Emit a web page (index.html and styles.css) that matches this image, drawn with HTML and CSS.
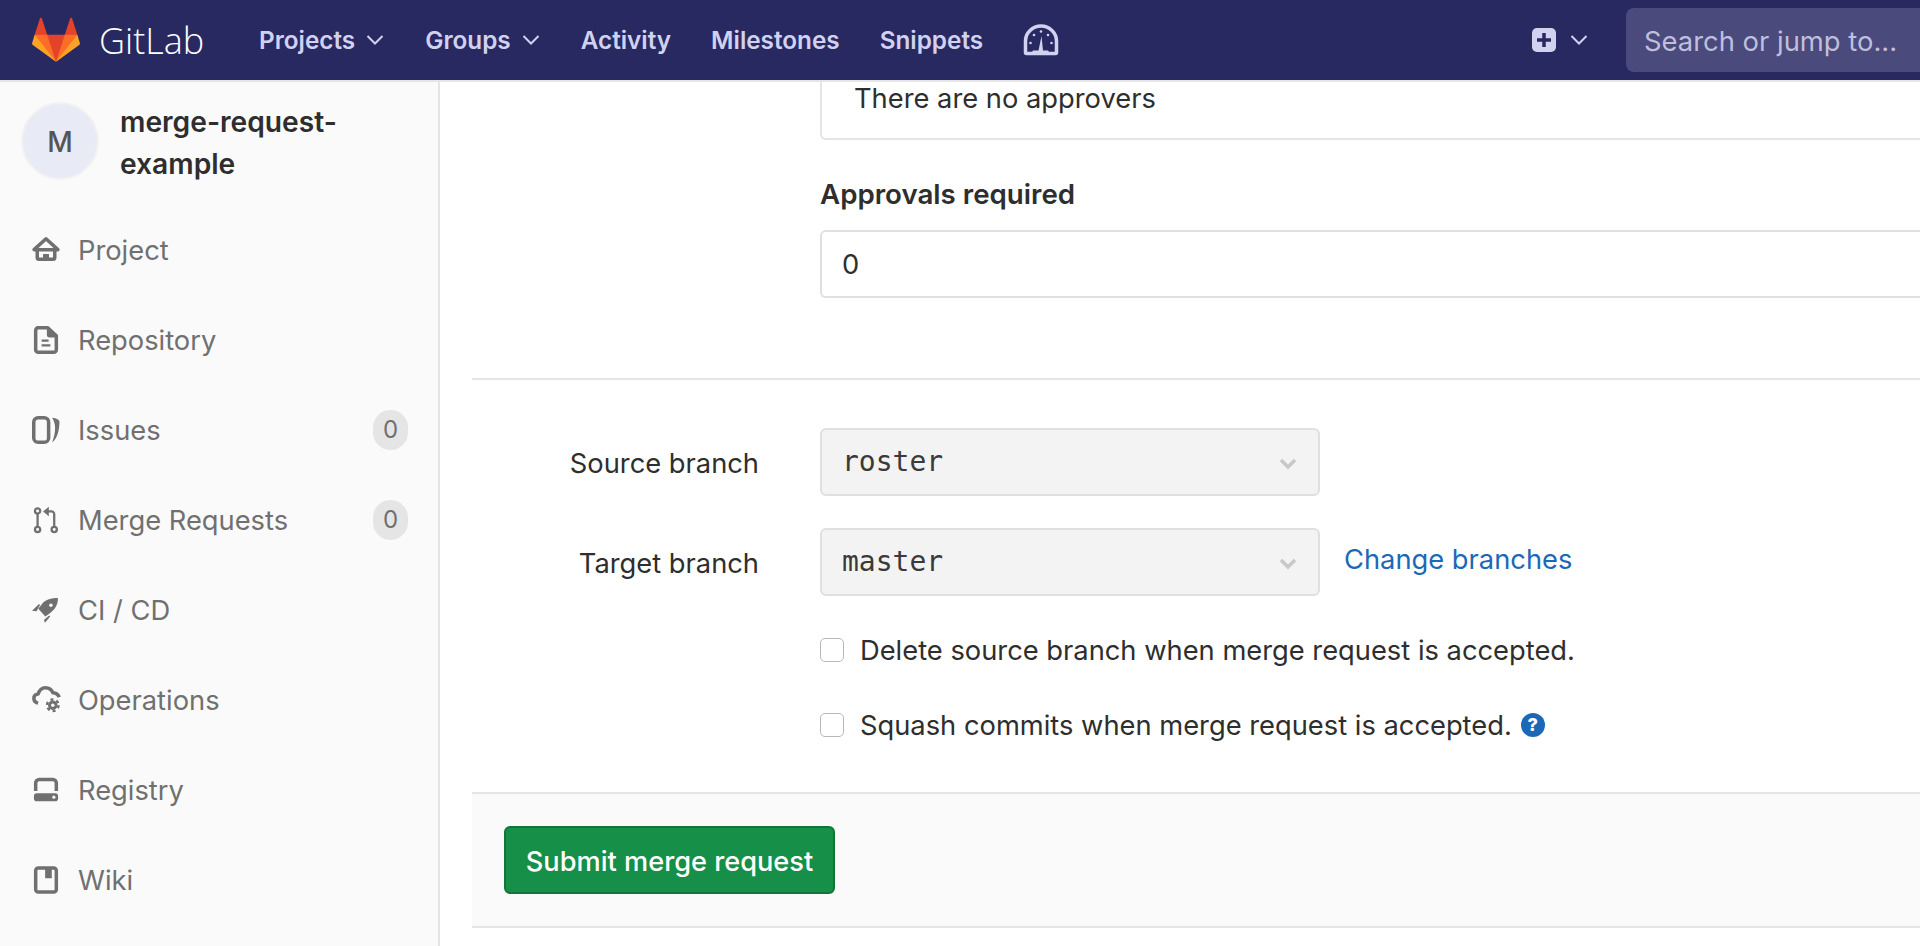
FILE: index.html

```html
<!DOCTYPE html>
<html lang="en">
<head>
  <meta charset="UTF-8">
  <title>New Merge Request - merge-request-example</title>
  <link rel="stylesheet" href="styles.css">
</head>
<body>
  <header class="navbar">
    <a class="brand" href="#">
      <svg class="tanuki" viewBox="0 0 36 36">
        <path fill="#e24329" d="M2 14l9.38 9v-9l-4-12.28c-.205-.632-1.176-.632-1.38 0z"/>
        <path fill="#e24329" d="M34 14l-9.38 9v-9l4-12.28c.205-.632 1.176-.632 1.38 0z"/>
        <path fill="#e24329" d="M18,34.38 3,14 33,14 Z"/>
        <path fill="#fc6d26" d="M18,34.38 11.38,14 2,14 6,25Z"/>
        <path fill="#fc6d26" d="M18,34.38 24.62,14 34,14 30,25Z"/>
        <path fill="#fca326" d="M2 14L.1 20.16c-.18.565 0 1.2.5 1.56l17.42 12.66z"/>
        <path fill="#fca326" d="M34 14l1.9 6.16c.18.565 0 1.2-.5 1.56L18 34.38z"/>
      </svg>
      <span class="brand-name">GitLab</span>
    </a>
    <nav class="top-links">
      <a href="#">Projects <svg class="caret" viewBox="0 0 18 12"><path d="M1.500 2l7.500 7.500L16.500 2"/></svg></a>
      <a href="#">Groups <svg class="caret" viewBox="0 0 18 12"><path d="M1.500 2l7.500 7.500L16.500 2"/></svg></a>
      <a href="#">Activity</a>
      <a href="#">Milestones</a>
      <a href="#">Snippets</a>
      <a href="#" class="perf-link">
        <svg class="perf-icon" viewBox="0 0 36 32">
          <path class="arch" d="M3.5 29.5a1 1 0 0 1-1-1V17a15.5 15 0 0 1 31 0v11.500a1 1 0 0 1-1 1z"/>
          <path class="needle" d="M19.500 12l1.500 14.500h5l1 1.500H10l1-1.500h5.500z" transform="translate(-1)"/>
          <circle cx="7.500" cy="19" r="1.300"/><circle cx="28.500" cy="19" r="1.300"/>
          <circle cx="11" cy="11" r="1.300"/><circle cx="25" cy="11" r="1.300"/><circle cx="18" cy="7.500" r="1.300"/>
        </svg>
      </a>
    </nav>
    <div class="nav-right">
      <a class="new-menu" href="#">
        <svg class="plus-icon" viewBox="0 0 24 24">
          <rect width="24" height="24" rx="5"/>
          <path d="M12 5v14M5 12h14"/>
        </svg>
        <svg class="caret" viewBox="0 0 18 12"><path d="M1.500 2l7.500 7.500L16.500 2"/></svg>
      </a>
      <div class="search-box">Search or jump to...</div>
    </div>
  </header>

  <div class="layout">
    <aside class="sidebar">
      <div class="project-head">
        <div class="avatar">M</div>
        <div class="project-name">merge-request-example</div>
      </div>
      <ul class="side-nav">
        <li>
          <svg class="side-icon" viewBox="0 0 16 16">
            <path class="line" d="M8 1.600L1.200 7.800h13.600z"/>
            <path class="line" d="M3 8v4.300a1 1 0 0 0 1 1h8a1 1 0 0 0 1-1V8"/>
            <path d="M6.300 10.300h3.400v3H6.300z"/>
          </svg>
          <span>Project</span>
        </li>
        <li>
          <svg class="side-icon" viewBox="0 0 16 16">
            <path class="line" d="M3 1h6l4.900 4.600V13.500a1.500 1.500 0 0 1-1.500 1.500H3.600a1.500 1.500 0 0 1-1.500-1.500v-11A1.500 1.500 0 0 1 3.600 1z"/>
            <path d="M8.500 1h1l4.400 4.500v1H10a1.500 1.500 0 0 1-1.500-1.500z"/>
            <path class="thin" d="M5.500 8.300h4M5.500 11.100h5"/>
          </svg>
          <span>Repository</span>
        </li>
        <li>
          <svg class="side-icon" viewBox="0 0 16 16">
            <rect class="line" x="1" y="1" width="8.500" height="14" rx="2.500"/>
            <path d="M11.500 1c2.600.300 4.200 1.300 4.200 2.300 0 4.500-1.200 9.500-4.200 11.900 1-3 1.700-5.500 1.700-8.200 0-2.300-.5-4-1.700-6z"/>
          </svg>
          <span>Issues</span>
          <span class="badge">0</span>
        </li>
        <li>
          <svg class="side-icon" viewBox="0 0 16 16">
            <circle class="thin" cx="3.200" cy="2.800" r="1.500"/>
            <circle class="thin" cx="3.200" cy="13.400" r="1.500"/>
            <circle class="thin" cx="12.700" cy="13.400" r="1.500"/>
            <path class="thin" d="M3.200 4.300v7.600M12.700 11.900V4.600a1.500 1.500 0 0 0-1.500-1.500H9"/>
            <path d="M9.600.400L6.300 3.100l3.300 2.700z"/>
          </svg>
          <span>Merge Requests</span>
          <span class="badge">0</span>
        </li>
        <li>
          <svg class="side-icon" viewBox="0 0 16 16">
            <path d="M14.800 1.200C11 1.200 8 2 5.700 4.500L3.600 7.300l4 4.400 2.600-1.900C13 8 15 5 14.800 1.200z"/>
            <circle class="hole" cx="10.800" cy="5.300" r="1"/>
            <path d="M0 8.400l4-3.800.6.600-2 3.500zM7.400 15.300l3-3.600-.6-.6-3 2.600z"/>
          </svg>
          <span>CI / CD</span>
        </li>
        <li>
          <svg class="side-icon side-icon-wide" viewBox="0 0 17 16">
            <path class="line" d="M3.400 9.800C1.800 9.400 1 8.300 1 7c0-1.500 1.200-2.500 2.500-2.500C4 2.700 5.500 1 7.600 1c1.900 0 3.500 1 4.300 2.900 1.500.1 3 1 3.600 2.500"/>
            <circle class="teeth" cx="11.800" cy="11" r="3.300"/>
            <circle cx="11.800" cy="11" r="2.700"/>
            <circle class="hole" cx="11.800" cy="11" r="1"/>
          </svg>
          <span>Operations</span>
        </li>
        <li>
          <svg class="side-icon" viewBox="0 0 16 16">
            <path class="line" d="M2.100 8.500V4a2 2 0 0 1 2-2h7.800a2 2 0 0 1 2 2v4.500"/>
            <rect x="1.100" y="9.800" width="13.800" height="4.600" rx="1.600"/>
            <circle class="hole" cx="12.500" cy="12.100" r=".9"/>
          </svg>
          <span>Registry</span>
        </li>
        <li>
          <svg class="side-icon" viewBox="0 0 16 16">
            <rect class="line" x="2.100" y="1.100" width="11.800" height="13.800" rx="1.500"/>
            <path d="M7.500 1h3.800v6H7.500z"/>
          </svg>
          <span>Wiki</span>
        </li>
      </ul>
    </aside>

    <main class="content">
      <form class="mr-form">
        <div class="field-col approvers-box">There are no approvers</div>
        <label class="field-col approvals-label">Approvals required</label>
        <input class="field-col approvals-input" type="text" value="0">

        <hr class="divider">

        <div class="branch-row">
          <label class="row-label">Source branch</label>
          <div class="branch-select">
            <span>roster</span>
            <svg class="select-caret" viewBox="0 0 18 12"><path d="M2 2l7 7 7-7"/></svg>
          </div>
        </div>
        <div class="branch-row target-row">
          <label class="row-label">Target branch</label>
          <div class="branch-select">
            <span>master</span>
            <svg class="select-caret" viewBox="0 0 18 12"><path d="M2 2l7 7 7-7"/></svg>
          </div>
          <a class="change-link" href="#">Change branches</a>
        </div>

        <label class="field-col check-row delete-row">
          <input type="checkbox">
          <span>Delete source branch when merge request is accepted.</span>
        </label>
        <label class="field-col check-row squash-row">
          <input type="checkbox">
          <span>Squash commits when merge request is accepted.</span>
          <a class="help-dot" href="#">?</a>
        </label>

        <div class="form-actions">
          <button class="btn-submit" type="button">Submit merge request</button>
        </div>
      </form>
    </main>
  </div>
</body>
</html>
```

FILE: styles.css

```css
* {
  box-sizing: border-box;
}
html, body {
  height: 100%;
  overflow: hidden;
}
body {
  margin: 0;
  background-color: #fff;
  color: #2e2e2e;
  font-family: Inter, 'Noto Sans', sans-serif;
  font-size: 27.3px;
}
a {
  text-decoration: none;
  color: inherit;
}

/* top bar */
.navbar {
  display: flex;
  align-items: center;
  height: 82px;
  background-color: #292961;
  border-bottom: 2px solid #e5e5e5;
  color: #d1d1f0;
}
.brand {
  display: flex;
  align-items: center;
  margin-left: 32px;
  width: 227px;
}
.tanuki {
  width: 48px;
  height: 48px;
}
.brand-name {
  margin-left: 19px;
  color: #fff;
  font-family: 'Open Sans', sans-serif;
  font-weight: 300;
  font-size: 36px;
}
.top-links {
  display: flex;
  align-items: center;
  gap: 40px;
  font-size: 24.3px;
  font-weight: 600;
}
.top-links a {
  display: flex;
  align-items: center;
  gap: 11px;
}
.top-links .caret {
  margin-right: 1px;
}
.caret {
  width: 18px;
  height: 12px;
  fill: none;
  stroke: #d1d1f0;
  stroke-width: 2;
}
.perf-icon {
  width: 36px;
  height: 32px;
  fill: #d1d1f0;
}
.perf-icon .arch {
  fill: none;
  stroke: #d1d1f0;
  stroke-width: 3.5;
}
.nav-right {
  display: flex;
  align-items: center;
  margin-left: auto;
  width: 388px;
}
.new-menu {
  display: flex;
  align-items: center;
  gap: 14px;
  margin-right: 38px;
}
.plus-icon {
  width: 24px;
  height: 24px;
  fill: #d1d1f0;
}
.plus-icon path {
  fill: none;
  stroke: #292961;
  stroke-width: 3.500;
}
.search-box {
  flex: 1;
  height: 64px;
  padding: 3px 0 0 18px;
  line-height: 61px;
  background-color: #4a4a7c;
  border-radius: 8px 0 0 8px;
  color: #bfbfdc;
  font-size: 27.4px;
  white-space: nowrap;
}

/* page below the bar */
.layout {
  display: flex;
  height: calc(100% - 82px);
}
.sidebar {
  width: 440px;
  flex-shrink: 0;
  background-color: #fafafa;
  border-right: 2px solid #e5e5e5;
}
.project-head {
  display: flex;
  padding: 20px 0 0 21px;
}
.avatar {
  width: 78px;
  height: 78px;
  line-height: 77px;
  text-align: center;
  background-color: #e8eaf6;
  border: 2px solid #f2f2f2;
  border-radius: 50%;
  color: #555;
  font-size: 28px;
  font-weight: 500;
}
.project-name {
  width: 240px;
  margin-left: 21px;
  font-size: 28.2px;
  font-weight: 600;
  line-height: 41.5px;
}
.side-nav {
  list-style: none;
  margin: 0;
  padding: 0;
  color: #707070;
}
.side-nav li {
  display: flex;
  align-items: center;
  height: 90px;
  padding: 0 30px 0 32px;
}
.project-head + .side-nav {
  margin-top: 20px;
}
.side-icon {
  width: 28px;
  height: 28px;
  margin-right: 18px;
  fill: #707070;
  flex-shrink: 0;
}
.side-icon-wide {
  width: 30px;
  margin-right: 16px;
}
.side-icon .line {
  fill: none;
  stroke: #707070;
  stroke-width: 2;
  stroke-linejoin: round;
}
.side-icon .thin {
  fill: none;
  stroke: #707070;
  stroke-width: 1.300;
}
.side-icon .hole {
  fill: #fafafa;
}
.side-icon .teeth {
  fill: none;
  stroke: #707070;
  stroke-width: 1.400;
  stroke-dasharray: 1.700 1.750;
}
.badge {
  width: 35px;
  height: 40px;
  margin-left: auto;
  line-height: 40px;
  text-align: center;
  background-color: #e5e5e5;
  border-radius: 20px;
  font-size: 24px;
}

/* form */
.content {
  flex: 1;
  min-width: 0;
  padding-left: 32px;
}
.field-col {
  margin-left: 348px;
}
.approvers-box {
  height: 58px;
  padding-left: 32px;
  line-height: 34px;
  border: 2px solid #e5e5e5;
  border-width: 0 0 2px 2px;
  border-bottom-left-radius: 6px;
}
.approvals-label {
  display: block;
  margin-top: 36px;
  line-height: 36px;
  font-size: 27.7px;
  font-weight: 600;
}
.approvals-input {
  display: block;
  width: calc(100% - 348px);
  height: 68px;
  margin-top: 18px;
  padding: 0 20px;
  background-color: #fff;
  border: 2px solid #e0e0e0;
  border-right: 0;
  border-radius: 6px 0 0 6px;
  color: #2e2e2e;
  font-family: inherit;
  font-size: 27.3px;
}
.divider {
  height: 2px;
  margin: 80px 0 48px;
  background-color: #e5e5e5;
  border: 0;
}
.branch-row {
  display: flex;
  align-items: center;
}
.target-row {
  margin-top: 32px;
}
.row-label {
  width: 287px;
  padding-top: 2px;
  text-align: right;
}
.branch-select {
  display: flex;
  align-items: center;
  justify-content: space-between;
  width: 500px;
  height: 68px;
  margin-left: 61px;
  padding: 0 21px 2px 20px;
  background-color: #f3f3f3;
  border: 2px solid #e0e0e0;
  border-radius: 6px;
  color: #3a3a3a;
  font-family: 'DejaVu Sans Mono', monospace;
  font-size: 28px;
}
.select-caret {
  width: 18px;
  height: 12px;
  margin-top: 6px;
  fill: none;
  stroke: #c8c8c8;
  stroke-width: 3.500;
}
.change-link {
  margin: -5px 0 0 24px;
  color: #1b69b6;
}
.check-row {
  display: flex;
  align-items: center;
  line-height: 34px;
}
.check-row span {
  padding-top: 2px;
}
.check-row input {
  appearance: none;
  width: 24px;
  height: 24px;
  margin: 0 16px 0 0;
  background-color: #fff;
  border: 1px solid #b8b8b8;
  border-radius: 5px;
}
.delete-row {
  margin-top: 36px;
}
.squash-row {
  margin-top: 39px;
}
.help-dot {
  width: 24px;
  height: 24px;
  margin-left: 9px;
  line-height: 24px;
  text-align: center;
  background-color: #1b69b6;
  border-radius: 50%;
  color: #fff;
  font-size: 18px;
  font-weight: 800;
}
.form-actions {
  margin-top: 49px;
  padding: 32px;
  background-color: #fafafa;
  border-top: 2px solid #e5e5e5;
  border-bottom: 2px solid #e5e5e5;
}
.btn-submit {
  display: block;
  width: 331px;
  height: 68px;
  padding: 2px 0 0;
  background-color: #168f48;
  border: 2px solid #12753a;
  border-radius: 6px;
  color: #fff;
  font-family: inherit;
  font-size: 27.2px;
  font-weight: 500;
}
```
